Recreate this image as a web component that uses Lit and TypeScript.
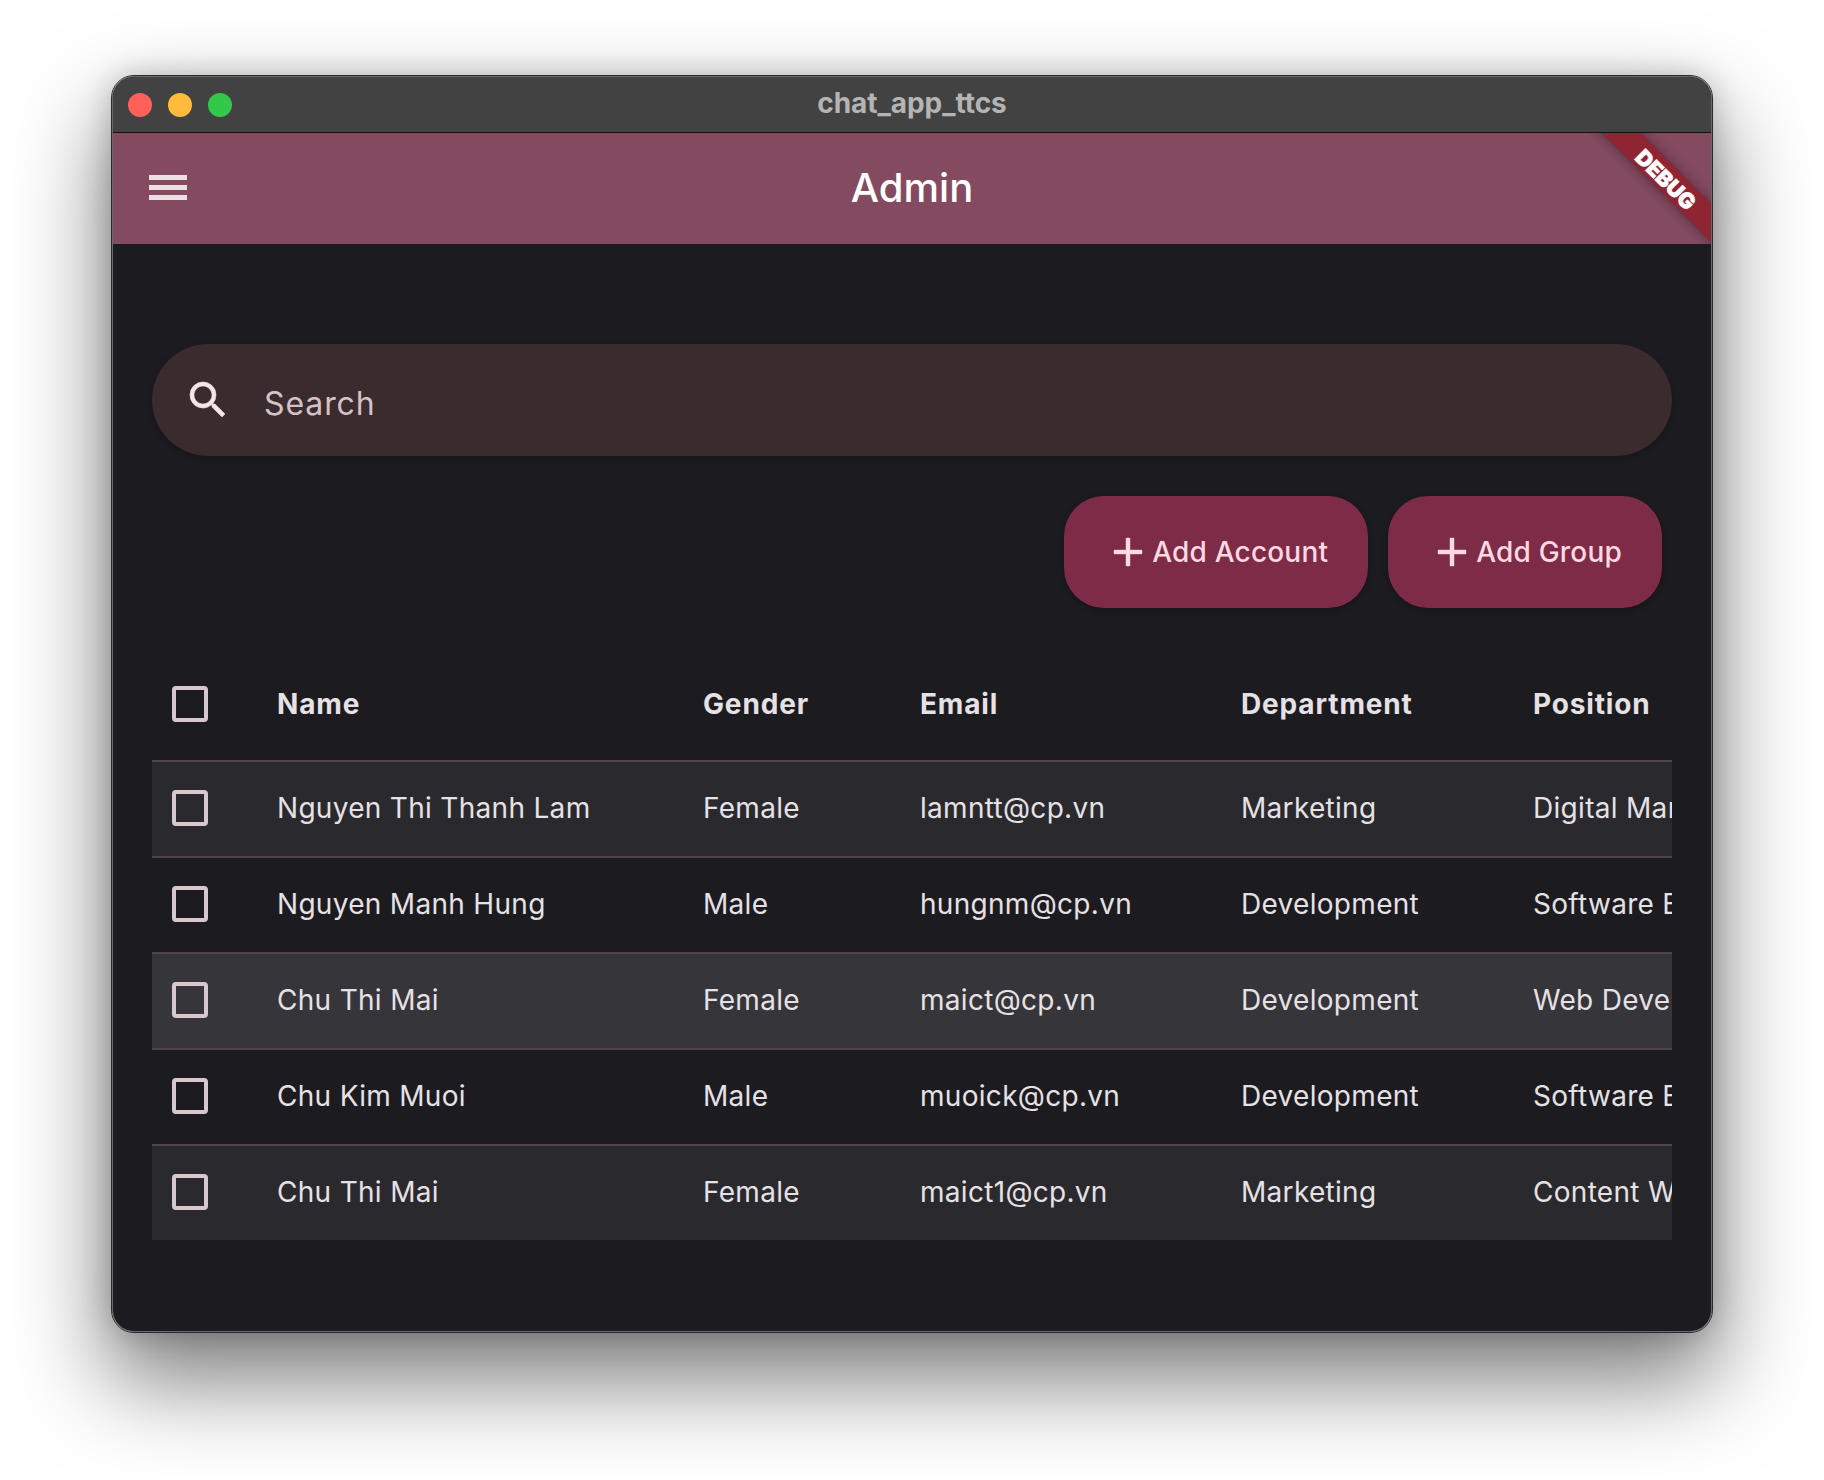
import { LitElement, html, css } from 'lit';
import { customElement } from 'lit/decorators.js';

// rows of the admin table, position text is cut off by the scroller like in the app
const ACCOUNTS = [
  { name: 'Nguyen Thi Thanh Lam', gender: 'Female', email: 'lamntt@cp.vn', department: 'Marketing', position: 'Digital Marketing', tone: 'soft' },
  { name: 'Nguyen Manh Hung', gender: 'Male', email: 'hungnm@cp.vn', department: 'Development', position: 'Software Engineer', tone: '' },
  { name: 'Chu Thi Mai', gender: 'Female', email: 'maict@cp.vn', department: 'Development', position: 'Web Developer', tone: 'strong' },
  { name: 'Chu Kim Muoi', gender: 'Male', email: 'muoick@cp.vn', department: 'Development', position: 'Software Engineer', tone: '' },
  { name: 'Chu Thi Mai', gender: 'Female', email: 'maict1@cp.vn', department: 'Marketing', position: 'Content Writer', tone: 'soft' },
];

@customElement('app-root')
export class AppRoot extends LitElement {
  static styles = css`
    :host {
      display: block;
      width: 1824px;
      height: 1480px;
      box-sizing: border-box;
      padding: 76px 112px 0;
      background: #fff;
      font-family: Inter, 'Noto Sans', sans-serif;
    }
    .window {
      height: 1256px;
      box-sizing: border-box;
      border-radius: 22px;
      overflow: hidden;
      background: #1c1b20;
      border: 1px solid #6a6a6a;
      outline: 1px solid #2a2a2a;
      display: flex;
      flex-direction: column;
    }
    .shadow {
      border-radius: 22px;
      box-shadow: 0 44px 90px 6px rgba(0, 0, 0, 0.5), 0 0 30px rgba(0, 0, 0, 0.22);
    }
    .titlebar {
      height: 55px;
      flex: none;
      background: #424242;
      border-bottom: 1px solid #111;
      display: grid;
      grid-template-columns: 1fr auto 1fr;
      align-items: center;
      padding: 0 15px;
    }
    .lights {
      display: flex;
      gap: 16px;
    }
    .light {
      width: 24px;
      height: 24px;
      border-radius: 50%;
    }
    .red { background: #ff6058; }
    .amber { background: #ffbb3a; }
    .green { background: #34c84a; }
    .wintitle {
      font-size: 28px;
      font-weight: 700;
      letter-spacing: -0.05px;
      color: #b4b4b4;
      padding-bottom: 4px;
    }
    .appbar {
      position: relative;
      overflow: hidden;
      flex: none;
      height: 111px;
      background: #834a60;
      display: grid;
      grid-template-columns: 1fr auto 1fr;
      align-items: center;
      padding: 0 36px;
      color: #fff;
    }
    .appbar svg {
      display: block;
    }
    .admin {
      font-size: 40px;
      font-weight: 500;
      color: #ffffff;
      padding-bottom: 2px;
    }
    .ribbon {
      position: absolute;
      top: 28px;
      right: -52px;
      width: 200px;
      height: 27px;
      box-sizing: border-box;
      padding-left: 11px;
      transform: rotate(45deg);
      background: #8f2433;
      box-shadow: 0 0 12px rgba(0, 0, 0, 0.4);
      color: #fff;
      font-size: 21.5px;
      font-weight: 900;
      -webkit-text-stroke: 0.6px #fff;
      line-height: 30px;
      text-align: center;
    }
    .content {
      padding: 100px 39px 0;
    }
    .search {
      height: 112px;
      border-radius: 56px;
      background: #3a2b2e;
      box-shadow: 0 2px 6px rgba(0, 0, 0, 0.3);
      display: flex;
      align-items: center;
      padding-left: 32px;
      gap: 32px;
      color: #d5c2c6;
      font-size: 32px;
      letter-spacing: 0.9px;
    }
    .search span {
      padding-top: 6px;
    }
    .actions {
      display: flex;
      justify-content: flex-end;
      gap: 20px;
      padding: 40px 10px 0 0;
    }
    .btn {
      height: 112px;
      box-sizing: border-box;
      padding: 0 40px;
      border-radius: 40px;
      background: #7d2b46;
      box-shadow: 0 2px 6px rgba(0, 0, 0, 0.3);
      color: #ffd9e2;
      font-size: 28px;
      font-weight: 500;
      letter-spacing: 0.2px;
      display: flex;
      align-items: center;
    }
    .table {
      margin-top: 40px;
      overflow: hidden;
    }
    .row {
      display: grid;
      grid-template-columns: 125px 426px 217px 321px 292px max-content;
      align-items: center;
      height: 96px;
      box-sizing: border-box;
      border-top: 2px solid #524346;
      padding-bottom: 2px;
      font-size: 28px;
      letter-spacing: 0.3px;
      color: #e6e1e5;
      white-space: nowrap;
      width: max-content;
      min-width: 100%;
    }
    .row.head {
      height: 112px;
      border-top: 0;
      padding-bottom: 0;
      font-weight: 700;
      letter-spacing: 0.85px;
    }
    .soft { background: #2a292e; }
    .strong { background: #36353a; }
    .check {
      width: 36px;
      height: 36px;
      margin-left: 20px;
      box-sizing: border-box;
      border: 4px solid #d7c8cc;
      border-radius: 4px;
    }
  `;

  private cells(a: string, b: string, c: string, d: string, e: string) {
    return html`
      <div class="check"></div>
      <div>${a}</div>
      <div>${b}</div>
      <div>${c}</div>
      <div>${d}</div>
      <div>${e}</div>
    `;
  }

  render() {
    return html`
      <div class="shadow">
        <div class="window">
          <div class="titlebar">
            <div class="lights">
              <div class="light red"></div>
              <div class="light amber"></div>
              <div class="light green"></div>
            </div>
            <div class="wintitle">chat_app_ttcs</div>
          </div>
          <div class="appbar">
            <svg width="38" height="27" viewBox="0 0 38 27">
              <path fill="#ece0e4" d="M0 0h38v5H0zM0 10h38v5H0zM0 20h38v5H0z" />
            </svg>
            <div class="admin">Admin</div>
            <div class="ribbon">DEBUG</div>
          </div>
          <div class="content">
            <div class="search">
              <svg width="48" height="48" viewBox="0 0 24 24">
                <path fill="#f2e6e9" stroke="#f2e6e9" stroke-width="0.3" d="M15.5 14h-.79l-.28-.27A6.471 6.471 0 0 0 16 9.5 6.5 6.5 0 1 0 9.5 16c1.61 0 3.09-.59 4.23-1.57l.27.28v.79l5 4.99L20.49 19l-4.99-5zm-6 0C7.01 14 5 11.99 5 9.5S7.01 5 9.5 5 14 7.01 14 9.5 11.99 14 9.5 14z" />
              </svg>
              <span>Search</span>
            </div>
            <div class="actions">
              <div class="btn">${this.plus()}Add Account</div>
              <div class="btn">${this.plus()}Add Group</div>
            </div>
            <div class="table">
              <div class="row head">${this.cells('Name', 'Gender', 'Email', 'Department', 'Position')}</div>
              ${ACCOUNTS.map(
                (a) => html`<div class="row ${a.tone}">${this.cells(a.name, a.gender, a.email, a.department, a.position)}</div>`
              )}
            </div>
          </div>
        </div>
      </div>
    `;
  }

  private plus() {
    return html`<svg width="48" height="48" viewBox="0 0 24 24">
      <path fill="#ffd9e2" stroke="#ffd9e2" stroke-width="0.2" d="M19 13h-6v6h-2v-6H5v-2h6V5h2v6h6v2z" />
    </svg>`;
  }
}
